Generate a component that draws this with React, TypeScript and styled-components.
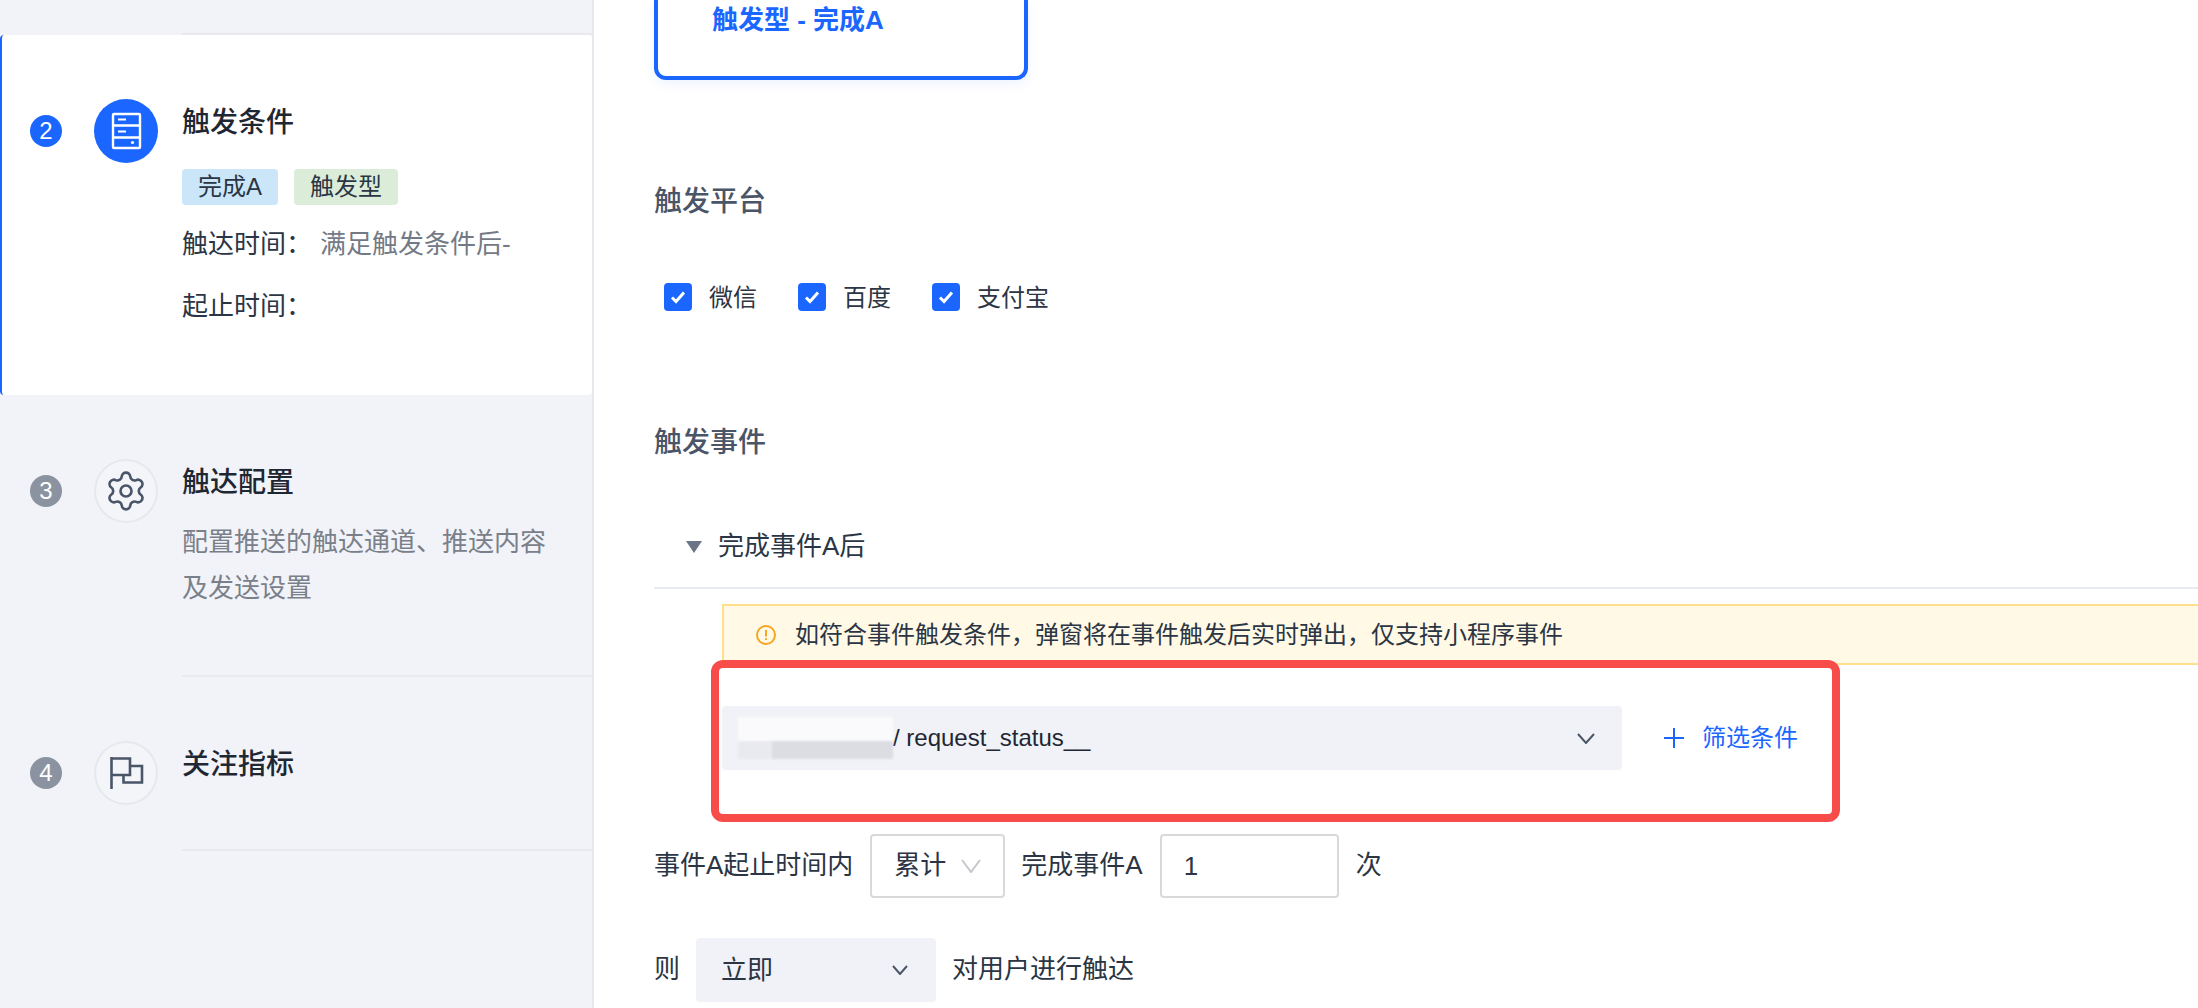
import styled, { createGlobalStyle } from 'styled-components';
import { Settings } from 'lucide-react';

const FONT = '"Liberation Sans", "Noto Sans CJK SC", sans-serif';
const BLUE = '#1a66ff';
const INK = '#2b3544';

const NOTICE = '如符合事件触发条件\uFF0C弹窗将在事件触发后实时弹出\uFF0C仅支持小程序事件';
const COLON = '\uFF1A';

const GlobalStyle = createGlobalStyle`
  html, body {
    margin: 0;
    padding: 0;
    background: #fff;
    overflow: hidden;
  }
  * {
    box-sizing: border-box;
  }
`;

const Chevron = ({ w, h, color, sw = 2 }: { w: number; h: number; color: string; sw?: number }) => (
  <svg width={w} height={h} viewBox={`0 0 ${w} ${h}`} fill="none">
    <polyline points={`1,1 ${w / 2},${h - 1} ${w - 1},1`} stroke={color} strokeWidth={sw} />
  </svg>
);

const ServerIcon = () => (
  <svg width="64" height="64" viewBox="0 0 64 64" fill="none">
    <rect x="19" y="15" width="27" height="34" rx="1" stroke="#fff" strokeWidth="2.4" />
    <path d="M19 26.5H46M19 38.5H46" stroke="#fff" strokeWidth="2.4" />
    <path d="M24 20.5H32M24 32.5H32" stroke="#fff" strokeWidth="2.2" />
    <circle cx="38.5" cy="43.5" r="1.6" fill="#fff" />
  </svg>
);

const FlagIcon = () => (
  <svg width="64" height="64" viewBox="0 0 64 64" fill="none">
    <path
      d="M17.5 16V48M17.5 17.5H36V34H17.5M36 25H48V41.5H29.5V34"
      stroke="#4a5568"
      strokeWidth="2.6"
    />
  </svg>
);

const WarnIcon = () => (
  <svg width="20" height="20" viewBox="0 0 20 20" fill="none">
    <circle cx="10" cy="10" r="9" stroke="#f5a623" strokeWidth="2" />
    <path d="M10 5V11.5M10 13.2V15" stroke="#f5a623" strokeWidth="2" />
  </svg>
);

const CheckMark = () => (
  <svg width="28" height="28" viewBox="0 0 28 28" fill="none">
    <polyline points="8,14.5 12,18.5 20,9.5" stroke="#fff" strokeWidth="3" />
  </svg>
);

const App = () => {
  return (
    <Page>
      <GlobalStyle />
      <Sidebar>
        <StepItem $height={35}>
          <StepBody $line />
        </StepItem>

        <StepItem $height={360} $active>
          <Marker>
            <StepNo $active>2</StepNo>
            <StepCircle $active>
              <ServerIcon />
            </StepCircle>
          </Marker>
          <StepBody $pad>
            <StepTitle>触发条件</StepTitle>
            <Tags>
              <Tag $bg="#cae6f8">完成A</Tag>
              <Tag $bg="#dbecd9">触发型</Tag>
            </Tags>
            <InfoRows>
              <InfoRow>
                <InfoKey>触达时间{COLON}</InfoKey>
                <InfoValue>满足触发条件后-</InfoValue>
              </InfoRow>
              <InfoRow>
                <InfoKey>起止时间{COLON}</InfoKey>
              </InfoRow>
            </InfoRows>
          </StepBody>
        </StepItem>

        <StepItem $height={282}>
          <Marker>
            <StepNo>3</StepNo>
            <StepCircle>
              <Settings size={44} color="#4a5568" strokeWidth={1.45} />
            </StepCircle>
          </Marker>
          <StepBody $pad $line>
            <StepTitle>触达配置</StepTitle>
            <StepDesc>配置推送的触达通道、推送内容及发送设置</StepDesc>
          </StepBody>
        </StepItem>

        <StepItem $height={174}>
          <Marker>
            <StepNo>4</StepNo>
            <StepCircle>
              <FlagIcon />
            </StepCircle>
          </Marker>
          <StepBody $pad $line>
            <StepTitle>关注指标</StepTitle>
          </StepBody>
        </StepItem>
      </Sidebar>

      <Main>
        <TypeCard>触发型 - 完成A</TypeCard>

        <SectionLabel $top={102}>触发平台</SectionLabel>
        <Platforms>
          {['微信', '百度', '支付宝'].map((name) => (
            <Platform key={name}>
              <CheckBox>
                <CheckMark />
              </CheckBox>
              {name}
            </Platform>
          ))}
        </Platforms>

        <SectionLabel $top={112}>触发事件</SectionLabel>
        <CollapseHead>
          <Caret />
          完成事件A后
        </CollapseHead>

        <EventBody>
          <Notice>
            <WarnIcon />
            <NoticeText>{NOTICE}</NoticeText>
          </Notice>

          <FilterRow>
            <EventSelect>
              <Redacted />
              <EventName>/ request_status__</EventName>
              <Chevron w={18} h={11} color="#4a5568" />
            </EventSelect>
            <AddFilter>
              <svg width="20" height="20" viewBox="0 0 20 20" fill="none">
                <path d="M10 0V20M0 10H20" stroke={BLUE} strokeWidth="2" />
              </svg>
              <AddFilterLabel>筛选条件</AddFilterLabel>
            </AddFilter>
            <Highlight />
          </FilterRow>
        </EventBody>

        <FormRow $top={64}>
          事件A起止时间内
          <BoxSelect>
            累计
            <Chevron w={20} h={14} color="#c5c7cc" />
          </BoxSelect>
          完成事件A
          <NumberBox>1</NumberBox>
          次
        </FormRow>

        <FormRow $top={40}>
          则
          <FillSelect>
            立即
            <Chevron w={16} h={10} color="#4a5568" />
          </FillSelect>
          对用户进行触达
        </FormRow>
      </Main>
    </Page>
  );
};

export default App;

const Page = styled.div`
  width: 2198px;
  height: 1008px;
  overflow: hidden;
  display: flex;
  font-family: ${FONT};
  color: ${INK};
`;

const Sidebar = styled.aside`
  flex: 0 0 594px;
  height: 100%;
  background: #f1f3f8;
  border-right: 2px solid #e6e8ee;
`;

const StepItem = styled.div<{ $height: number; $active?: boolean }>`
  height: ${(p) => p.$height}px;
  display: flex;
  background: ${(p) => (p.$active ? '#fff' : 'transparent')};
  border-left: ${(p) => (p.$active ? `2px solid ${BLUE}` : 'none')};
  border-radius: ${(p) => (p.$active ? '4px' : '0')};
  padding-left: ${(p) => (p.$active ? '28px' : '30px')};
`;

const Marker = styled.div`
  flex: 0 0 auto;
  display: flex;
  align-items: flex-start;
  gap: 32px;
  padding-top: 64px;
`;

const StepNo = styled.div<{ $active?: boolean }>`
  width: 32px;
  height: 32px;
  margin-top: 16px;
  border-radius: 50%;
  background: ${(p) => (p.$active ? BLUE : '#8a939f')};
  color: #fff;
  font-size: 24px;
  line-height: 32px;
  text-align: center;
`;

const StepCircle = styled.div<{ $active?: boolean }>`
  width: 64px;
  height: 64px;
  border-radius: 50%;
  display: flex;
  align-items: center;
  justify-content: center;
  background: ${(p) => (p.$active ? BLUE : '#f3f5f9')};
  box-shadow: ${(p) => (p.$active ? 'none' : 'inset 0 0 0 2px #e6e8ed')};
`;

const StepBody = styled.div<{ $pad?: boolean; $line?: boolean }>`
  flex: 1;
  margin-left: ${(p) => (p.$pad ? '24px' : '152px')};
  padding-top: ${(p) => (p.$pad ? '64px' : '0')};
  border-bottom: ${(p) => (p.$line ? '2px solid #e8eaf0' : 'none')};
`;

const StepTitle = styled.div`
  height: 46px;
  padding-top: 1px;
  font-size: 28px;
  line-height: 46px;
  font-weight: 500;
  color: #1f2733;
`;

const Tags = styled.div`
  display: flex;
  gap: 16px;
  margin-top: 24px;
`;

const Tag = styled.span<{ $bg: string }>`
  height: 36px;
  padding: 0 16px;
  border-radius: 4px;
  background: ${(p) => p.$bg};
  font-size: 24px;
  line-height: 36px;
`;

const InfoRows = styled.div`
  margin-top: 8px;
`;

const InfoRow = styled.div`
  display: flex;
  font-size: 26px;
  line-height: 62px;
`;

const InfoKey = styled.span`
  width: 138px;
`;

const InfoValue = styled.span`
  color: #747a85;
`;

const StepDesc = styled.div`
  width: 376px;
  margin-top: 14px;
  font-size: 26px;
  line-height: 46px;
  color: #7a808a;
`;

const Main = styled.main`
  flex: 1;
  min-width: 0;
  display: flex;
  flex-direction: column;
  padding-left: 60px;
`;

const TypeCard = styled.div`
  width: 374px;
  height: 80px;
  padding-left: 54px;
  border: 4px solid ${BLUE};
  border-top: none;
  border-radius: 0 0 12px 12px;
  box-shadow: 0 4px 12px rgba(26, 102, 255, 0.08);
  background: #fff;
  color: ${BLUE};
  font-size: 26px;
  line-height: 40px;
  font-weight: 700;
`;

const SectionLabel = styled.div<{ $top: number }>`
  margin-top: ${(p) => p.$top}px;
  font-size: 28px;
  line-height: 40px;
  font-weight: 500;
  color: #4a5568;
`;

const Platforms = styled.div`
  display: flex;
  gap: 41px;
  margin-top: 61px;
  padding-left: 10px;
`;

const Platform = styled.label`
  display: flex;
  align-items: flex-start;
  gap: 17px;
  height: 28px;
  font-size: 24px;
  line-height: 30px;
`;

const CheckBox = styled.span`
  width: 28px;
  height: 28px;
  border-radius: 4px;
  background: ${BLUE};
  display: block;
`;

const CollapseHead = styled.div`
  height: 126px;
  padding: 60px 0 0 32px;
  display: flex;
  align-items: flex-start;
  gap: 16px;
  border-bottom: 2px solid #e8ebef;
  font-size: 26px;
  line-height: 46px;
`;

const Caret = styled.span`
  width: 0;
  height: 0;
  margin-top: 18px;
  border-left: 8.5px solid transparent;
  border-right: 8.5px solid transparent;
  border-top: 12px solid #6a7585;
`;

const EventBody = styled.div`
  display: flex;
  flex-direction: column;
  padding: 15px 0 0 68px;
`;

const Notice = styled.div`
  height: 61px;
  padding-left: 32px;
  display: flex;
  align-items: center;
  gap: 19px;
  background: #fff9e6;
  border: 2px solid #ffe08a;
  border-right: none;
  font-size: 24px;
`;

const NoticeText = styled.span`
  margin-top: -4px;
`;

const FilterRow = styled.div`
  position: relative;
  margin-top: 41px;
  display: flex;
  align-items: center;
  gap: 42px;
`;

const EventSelect = styled.div`
  width: 900px;
  height: 64px;
  padding: 0 27px 0 16px;
  display: flex;
  align-items: center;
  background: #f0f2f7;
  border-radius: 4px;
  font-size: 24px;
  color: #1f2733;
`;

const Redacted = styled.div`
  flex: 0 0 155px;
  height: 42px;
  filter: blur(1px);
  background:
    linear-gradient(#fafafc, #fafafc) 0 0 / 100% 24px no-repeat,
    linear-gradient(#e9eaef, #e9eaef) 0 100% / 34px 18px no-repeat,
    linear-gradient(#dcdde3, #dcdde3) 0 100% / 100% 18px no-repeat;
`;

const EventName = styled.span`
  flex: 1;
`;

const AddFilter = styled.div`
  display: flex;
  align-items: center;
  gap: 18px;
  color: ${BLUE};
  font-size: 24px;
`;

const AddFilterLabel = styled.span`
  margin-top: -5px;
`;

const Highlight = styled.div`
  position: absolute;
  left: -11px;
  top: -46px;
  width: 1129px;
  height: 162px;
  border: 8px solid #f84c4a;
  border-radius: 12px;
  pointer-events: none;
`;

const FormRow = styled.div<{ $top: number }>`
  margin-top: ${(p) => p.$top}px;
  height: 64px;
  display: flex;
  align-items: flex-start;
  font-size: 26px;
  line-height: 62px;
  color: ${INK};
`;

const BoxSelect = styled.div`
  width: 135px;
  height: 64px;
  margin: 0 16px 0 17px;
  padding: 0 22px;
  display: flex;
  align-items: flex-start;
  justify-content: space-between;
  line-height: 58px;
  border: 2px solid #d9d9d9;
  border-radius: 4px;

  svg {
    align-self: center;
  }
`;

const NumberBox = styled.div`
  width: 179px;
  height: 64px;
  margin: 0 17px;
  padding-left: 22px;
  line-height: 60px;
  border: 2px solid #d9d9d9;
  border-radius: 4px;
`;

const FillSelect = styled.div`
  width: 240px;
  height: 64px;
  margin: 0 16px;
  padding: 0 28px 0 25px;
  display: flex;
  align-items: flex-start;
  justify-content: space-between;
  line-height: 64px;
  background: #f0f2f7;
  border-radius: 4px;

  svg {
    align-self: center;
  }
`;
